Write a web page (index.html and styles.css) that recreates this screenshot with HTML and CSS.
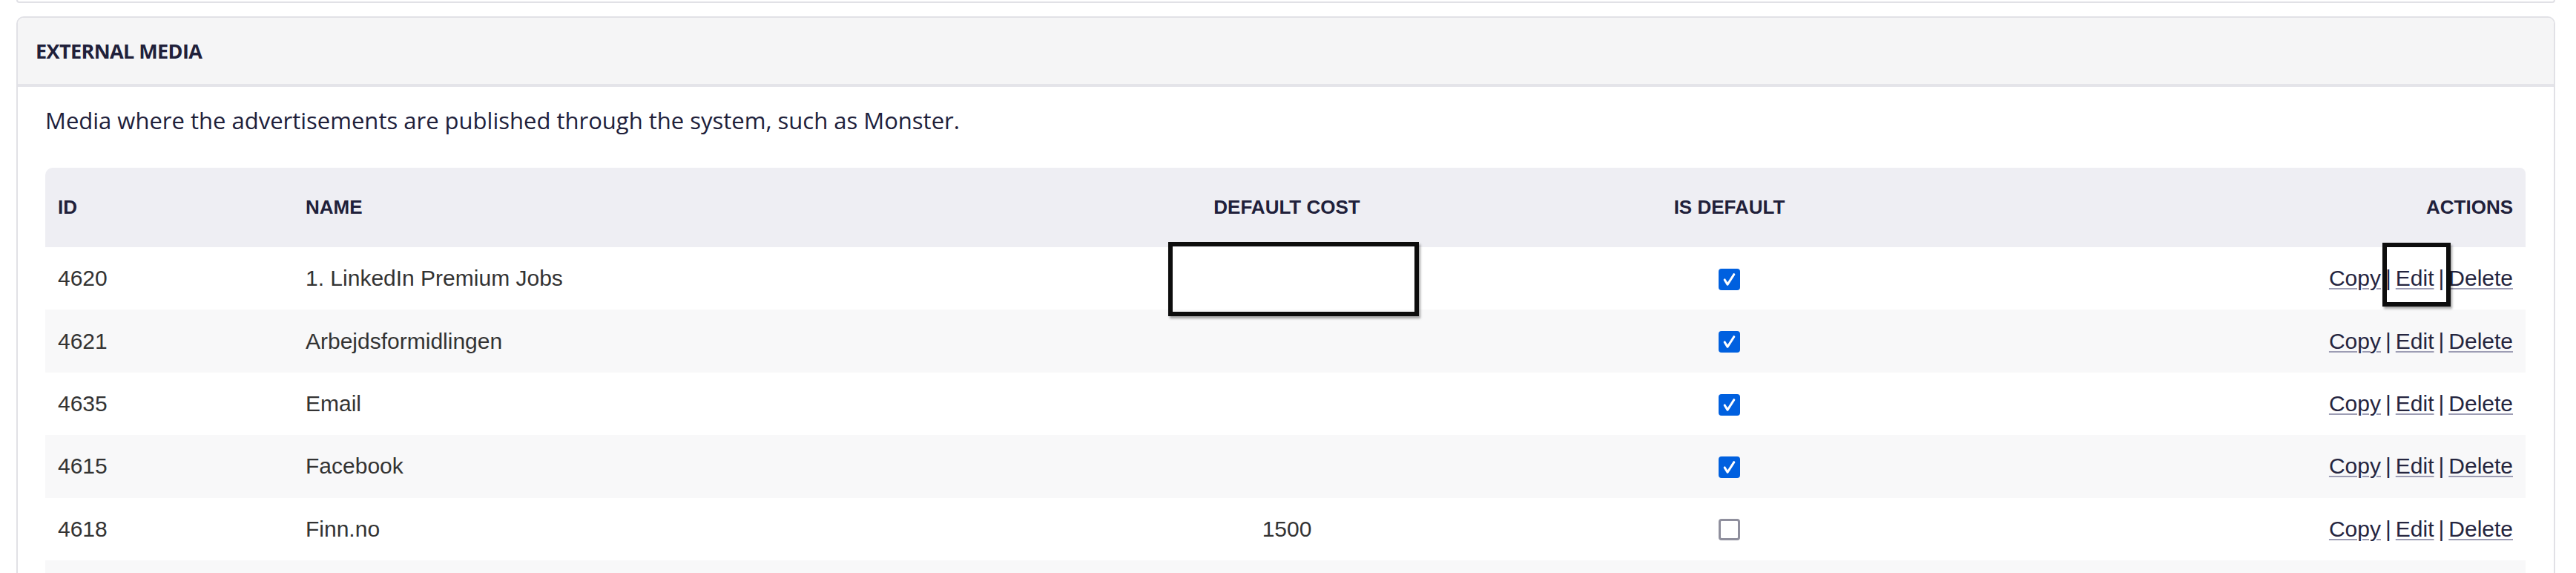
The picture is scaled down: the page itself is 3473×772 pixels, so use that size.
FILE: index.html
```html
<!DOCTYPE html>
<html lang="en">

<head>
    <meta charset="UTF-8">
    <meta name="viewport" content="width=device-width, initial-scale=1.0">
    <title>External Media</title>
    <link rel="stylesheet" href="styles.css">
</head>

<body>
    <div class="page">
        <div class="card card-prev"></div>

        <section class="card">
            <header class="card-header">
                <h2>EXTERNAL MEDIA</h2>
            </header>

            <div class="card-body">
                <p class="intro">Media where the advertisements are published through the system, such as Monster.</p>

                <table class="media-table">
                    <thead>
                        <tr>
                            <th class="col-id">ID</th>
                            <th class="col-name">NAME</th>
                            <th class="col-cost">DEFAULT COST</th>
                            <th class="col-default">IS DEFAULT</th>
                            <th class="col-actions">ACTIONS</th>
                        </tr>
                    </thead>
                    <tbody>
                        <tr>
                            <td>4620</td>
                            <td>1. LinkedIn Premium Jobs</td>
                            <td class="col-cost"></td>
                            <td class="col-default"><span class="check checked"><svg viewBox="0 0 30 30"><path d="M8.5 15.5 L12.5 22 L21.5 8"/></svg></span></td>
                            <td class="col-actions"><a href="#">Copy</a><span class="sep">|</span><a href="#">Edit</a><span class="sep">|</span><a href="#">Delete</a></td>
                        </tr>
                        <tr>
                            <td>4621</td>
                            <td>Arbejdsformidlingen</td>
                            <td class="col-cost"></td>
                            <td class="col-default"><span class="check checked"><svg viewBox="0 0 30 30"><path d="M8.5 15.5 L12.5 22 L21.5 8"/></svg></span></td>
                            <td class="col-actions"><a href="#">Copy</a><span class="sep">|</span><a href="#">Edit</a><span class="sep">|</span><a href="#">Delete</a></td>
                        </tr>
                        <tr>
                            <td>4635</td>
                            <td>Email</td>
                            <td class="col-cost"></td>
                            <td class="col-default"><span class="check checked"><svg viewBox="0 0 30 30"><path d="M8.5 15.5 L12.5 22 L21.5 8"/></svg></span></td>
                            <td class="col-actions"><a href="#">Copy</a><span class="sep">|</span><a href="#">Edit</a><span class="sep">|</span><a href="#">Delete</a></td>
                        </tr>
                        <tr>
                            <td>4615</td>
                            <td>Facebook</td>
                            <td class="col-cost"></td>
                            <td class="col-default"><span class="check checked"><svg viewBox="0 0 30 30"><path d="M8.5 15.5 L12.5 22 L21.5 8"/></svg></span></td>
                            <td class="col-actions"><a href="#">Copy</a><span class="sep">|</span><a href="#">Edit</a><span class="sep">|</span><a href="#">Delete</a></td>
                        </tr>
                        <tr>
                            <td>4618</td>
                            <td>Finn.no</td>
                            <td class="col-cost">1500</td>
                            <td class="col-default"><span class="check"></span></td>
                            <td class="col-actions"><a href="#">Copy</a><span class="sep">|</span><a href="#">Edit</a><span class="sep">|</span><a href="#">Delete</a></td>
                        </tr>
                        <tr>
                            <td></td>
                            <td></td>
                            <td class="col-cost"></td>
                            <td class="col-default"></td>
                            <td class="col-actions"></td>
                        </tr>
                    </tbody>
                </table>
            </div>
        </section>

        <!-- highlight marks drawn over the table -->
        <div class="mark mark-cost"></div>
        <div class="mark mark-edit"></div>
    </div>
</body>

</html>
```

FILE: styles.css
```css
html,
body {
    margin: 0;
    background: #ffffff;
    overflow: hidden;
}

.page {
    position: relative;
    padding: 0 28px 0 22px;
}

.card {
    border: 2px solid #e1e1e6;
    border-radius: 10px;
    background: #ffffff;
}

.card-prev {
    height: 2px;
    border-top: 0;
    border-radius: 0 0 10px 10px;
    margin-bottom: 18px;
}

.card-header {
    height: 89px;
    display: flex;
    align-items: center;
    padding: 0 24px;
    background-color: #f5f5f6;
    border-bottom: 4px solid #e4e4e9;
    border-radius: 8px 8px 0 0;
}

.card-header h2 {
    margin: 0;
    font-family: "Open Sans", sans-serif;
    font-size: 27px;
    font-weight: bold;
    letter-spacing: -0.6px;
    color: #20203a;
}

.card-body {
    padding: 23px 38px 0 37px;
}

.intro {
    margin: 0 0 41px;
    font-family: "Open Sans", sans-serif;
    font-size: 31px;
    line-height: 45px;
    color: #20203a;
}

.media-table {
    width: 100%;
    table-layout: fixed;
    border-collapse: separate;
    border-spacing: 0;
    font-family: "Liberation Sans", Arial, sans-serif;
}

.media-table th {
    height: 107px;
    padding: 0 17px;
    background-color: #eeeef3;
    color: #20203a;
    font-size: 26px;
    font-weight: bold;
    text-align: left;
}

.media-table th:first-child {
    border-top-left-radius: 10px;
}

.media-table th:last-child {
    border-top-right-radius: 8px;
}

.media-table td {
    height: 84.4px;
    padding: 0 17px;
    font-size: 30px;
    color: #333333;
    vertical-align: middle;
}

.media-table tbody tr:nth-child(even) td {
    background-color: #f8f8f9;
}

.col-id {
    width: 300px;
}

.col-name {
    width: 969px;
}

.media-table .col-cost {
    width: 640px;
    text-align: center;
}

.media-table .col-default {
    width: 485px;
    text-align: center;
}

.media-table .col-actions {
    text-align: right;
}

.check {
    display: inline-block;
    width: 29px;
    height: 29px;
    box-sizing: border-box;
    border: 3px solid #8f8f9d;
    border-radius: 4px;
    background: #ffffff;
    vertical-align: middle;
    position: relative;
    top: -1px;
}

.check.checked {
    border: 0;
    background: #0060df;
}

.check svg {
    display: block;
    width: 29px;
    height: 29px;
    fill: none;
    stroke: #ffffff;
    stroke-width: 3.2;
    stroke-linecap: round;
    stroke-linejoin: round;
}

.col-actions a {
    color: #25253f;
    text-decoration: underline;
    text-decoration-color: #9d9db4;
    text-decoration-thickness: 2px;
    text-underline-offset: 3px;
}

.sep {
    margin: 0 6px;
    color: #25253f;
}

.mark {
    position: absolute;
    box-sizing: border-box;
    border: 6px solid #0d0d0d;
    box-shadow: 2px 3px 3px rgba(0, 0, 0, 0.35);
}

.mark-cost {
    left: 1575px;
    top: 326px;
    width: 338px;
    height: 100px;
}

.mark-edit {
    left: 3212px;
    top: 327px;
    width: 92px;
    height: 86px;
}
```
